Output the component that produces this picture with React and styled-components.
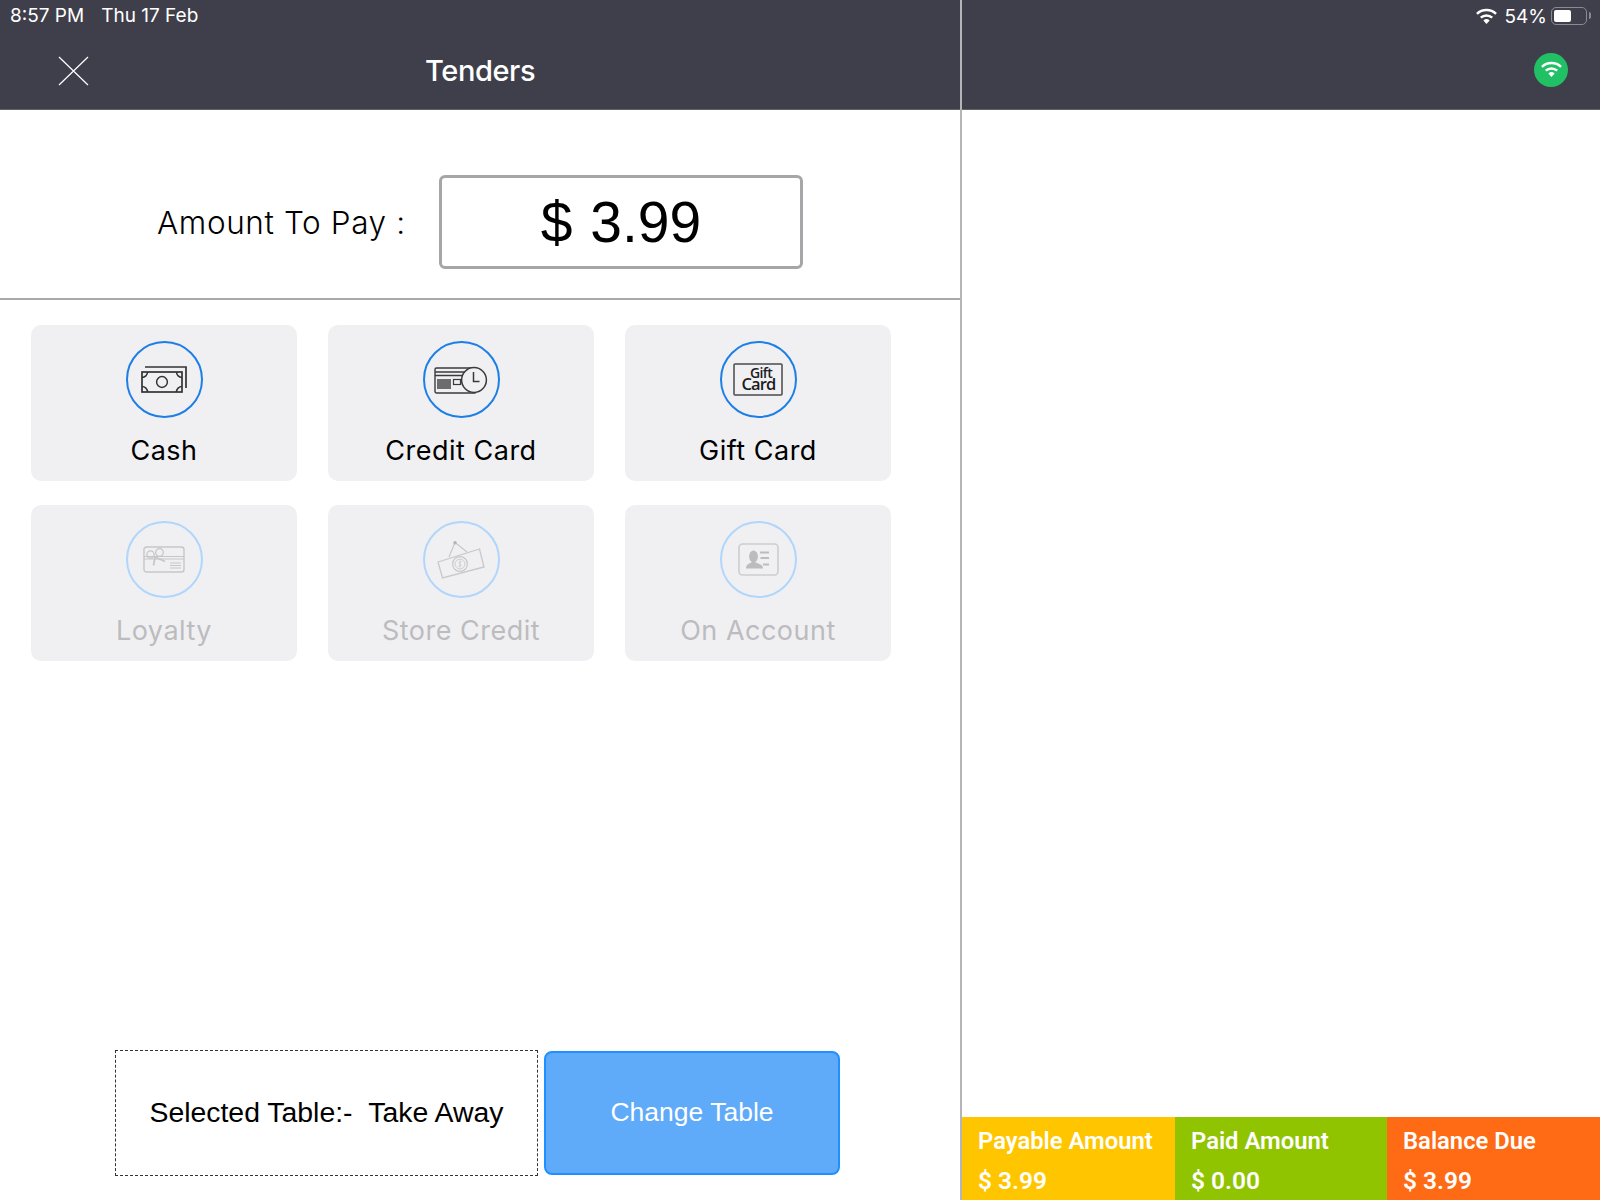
import React from "react";
import styled, { createGlobalStyle } from "styled-components";

const GlobalStyle = createGlobalStyle`
  html, body {
    margin: 0;
    padding: 0;
    background: #fff;
  }
  * {
    box-sizing: border-box;
  }
`;

const WifiGlyph = ({ size }) => (
  <svg width={size} height={size * 0.78} viewBox="0 0 22 17">
    <path d="M1 6 A14.5 14.5 0 0 1 21 6" fill="none" stroke="#fff" strokeWidth="2.6" />
    <path d="M5 10 A9 9 0 0 1 17 10" fill="none" stroke="#fff" strokeWidth="2.6" />
    <path d="M7.7 13 A4.8 4.8 0 0 1 14.3 13 L11 16.6 Z" fill="#fff" />
  </svg>
);

const CashIcon = () => (
  <svg width="46" height="27" viewBox="0 0 46 27" fill="none" stroke="#333335">
    <path d="M4 1 H45 V22" strokeWidth="1.7" />
    <rect x="1" y="6" width="40" height="20" strokeWidth="1.7" />
    <circle cx="21" cy="16" r="5.4" strokeWidth="1.5" />
    <path d="M1 11.5 A5.5 5.5 0 0 0 6.5 6 M35.5 6 A5.5 5.5 0 0 0 41 11.5 M1 20.5 A5.5 5.5 0 0 1 6.5 26 M35.5 26 A5.5 5.5 0 0 1 41 20.5" strokeWidth="1.5" />
  </svg>
);

const CreditIcon = () => (
  <svg width="54" height="28" viewBox="0 0 54 28" fill="none" stroke="#3a3a3c">
    <rect x="1" y="2" width="41" height="25" rx="1.5" strokeWidth="1.4" />
    <path d="M1 6 H42 M1 9.5 H42" strokeWidth="1.3" />
    <rect x="3" y="13" width="14" height="10" fill="#6c6c6e" stroke="none" />
    <rect x="19.5" y="13.5" width="7" height="5" strokeWidth="1.2" />
    <circle cx="40" cy="14" r="12.4" fill="#f0f0f3" strokeWidth="1.5" />
    <path d="M39.5 6 V15.5 H45.5" strokeWidth="1.5" />
  </svg>
);

const GiftIcon = () => (
  <svg width="50" height="33" viewBox="0 0 50 33">
    <rect x="1" y="1" width="48" height="31" rx="1" fill="none" stroke="#4a4a4c" strokeWidth="1.5" />
    <text fontFamily="'Open Sans', sans-serif" fontWeight="600" fill="#1c1c1e">
      <tspan x="17" y="15" fontSize="14" letterSpacing="-0.6">Gift</tspan>
      <tspan x="8.5" y="27" fontSize="16.5" letterSpacing="-0.9">Card</tspan>
    </text>
  </svg>
);

const LoyaltyIcon = () => (
  <svg width="42" height="27" viewBox="0 0 42 27" fill="none" stroke="#c6c6c8">
    <rect x="1" y="1" width="40" height="25" rx="2.5" strokeWidth="1.4" />
    <path d="M1 10.5 H41 M1 13 H41" strokeWidth="1.1" />
    <path d="M27 17 H38 M27 19.5 H38 M27 22 H38" strokeWidth="1.1" />
    <circle cx="7.5" cy="8.5" r="3.6" strokeWidth="1.3" />
    <circle cx="16.5" cy="6.5" r="3.8" strokeWidth="1.3" />
    <path d="M12 11 L22 15.5 M12 11 L10.5 19.5" strokeWidth="1.7" />
  </svg>
);

const StoreCreditIcon = () => (
  <svg width="48" height="38" viewBox="0 0 48 38" fill="none" stroke="#c8c8ca">
    <path d="M12 16 L18 1.5 L30 11" strokeWidth="1.2" />
    <circle cx="18" cy="1.8" r="1.7" fill="#b4b4b6" stroke="none" />
    <path d="M1 21 L42.5 8 L47 26 L5.5 37 Z" fill="#f0f0f3" strokeWidth="1.3" />
    <circle cx="23" cy="23" r="7.4" strokeWidth="1.2" />
    <circle cx="23" cy="23" r="4.9" strokeWidth="0.9" />
    <path d="M24.6 20.8 C22.4 19.8 21.2 21.6 23 23 C25 24.2 23.6 26 21.4 25 M23 19.5 V26.5" strokeWidth="0.8" />
  </svg>
);

const AccountIcon = () => (
  <svg width="41" height="33" viewBox="0 0 41 33">
    <rect x="1" y="1" width="39" height="31" rx="3.5" fill="none" stroke="#cdcdcf" strokeWidth="1.6" />
    <ellipse cx="15.5" cy="13.5" rx="4.4" ry="6" fill="#bcbcbe" />
    <path d="M8 25.5 C8 21 12 20.5 14 19 H17 C19 20.5 25 21 25 25.5 Z" fill="#bcbcbe" />
    <path d="M22 9.5 H31 M22.5 15 H31 M25 21.5 H31" stroke="#bcbcbe" strokeWidth="2" />
  </svg>
);

const tenders = [
  { name: "Cash", icon: <CashIcon /> },
  { name: "Credit Card", icon: <CreditIcon /> },
  { name: "Gift Card", icon: <GiftIcon /> },
  { name: "Loyalty", icon: <LoyaltyIcon />, disabled: true },
  { name: "Store Credit", icon: <StoreCreditIcon />, disabled: true },
  { name: "On Account", icon: <AccountIcon />, disabled: true },
];

export default function App() {
  return (
    <>
      <GlobalStyle />
      <Screen>
        <LeftPane>
          <Header>
            <StatusText>
              <span>8:57 PM</span>
              <span>Thu 17 Feb</span>
            </StatusText>
            <NavRow>
              <CloseButton>
                <svg width="32" height="30" viewBox="0 0 32 30" stroke="#fff" strokeWidth="1.2">
                  <path d="M1 1 L30 29 M30 1 L1 29" />
                </svg>
              </CloseButton>
              <Title>Tenders</Title>
            </NavRow>
          </Header>
          <AmountRow>
            <AmountLabel>Amount To Pay :</AmountLabel>
            <AmountBox>$ 3.99</AmountBox>
          </AmountRow>
          <TenderGrid>
            {tenders.map((t) => (
              <TenderTile key={t.name}>
                <IconCircle $disabled={t.disabled}>{t.icon}</IconCircle>
                <TenderName $disabled={t.disabled}>{t.name}</TenderName>
              </TenderTile>
            ))}
          </TenderGrid>
          <TableRow>
            <SelectedTable>Selected Table:-&nbsp;&nbsp;Take Away</SelectedTable>
            <ChangeTable>Change Table</ChangeTable>
          </TableRow>
        </LeftPane>
        <RightPane>
          <Header>
            <StatusRight>
              <WifiGlyph size={21} />
              <BatteryPercent>54%</BatteryPercent>
              <Battery>
                <BatteryFill />
              </Battery>
            </StatusRight>
            <NavRight>
              <WifiBadge>
                <WifiGlyph size={21} />
              </WifiBadge>
            </NavRight>
          </Header>
          <Summary>
            <SummaryCell $bg="#ffc600" $w={213}>
              <SummaryLabel>Payable Amount</SummaryLabel>
              <SummaryValue>$ 3.99</SummaryValue>
            </SummaryCell>
            <SummaryCell $bg="#90c400" $w={212}>
              <SummaryLabel>Paid Amount</SummaryLabel>
              <SummaryValue>$ 0.00</SummaryValue>
            </SummaryCell>
            <SummaryCell $bg="#ff6a14" $w={213}>
              <SummaryLabel>Balance Due</SummaryLabel>
              <SummaryValue>$ 3.99</SummaryValue>
            </SummaryCell>
          </Summary>
        </RightPane>
      </Screen>
    </>
  );
}

const Screen = styled.div`
  display: flex;
  width: 1600px;
  height: 1200px;
  overflow: hidden;
  background: #fff;
  font-family: "Roboto", "Liberation Sans", sans-serif;
`;

const LeftPane = styled.div`
  display: flex;
  flex-direction: column;
  width: 962px;
  height: 100%;
  border-right: 2px solid #b5b5b7;
`;

const RightPane = styled.div`
  display: flex;
  flex-direction: column;
  justify-content: space-between;
  width: 638px;
  height: 100%;
`;

const Header = styled.div`
  height: 110px;
  flex: none;
  background: #3f3f4b;
  color: #fff;
  border-bottom: 1px solid #62626c;
`;

const StatusText = styled.div`
  display: flex;
  gap: 17px;
  height: 32px;
  padding: 6px 0 0 10px;
  font-family: "Inter", sans-serif;
  font-size: 19px;
  line-height: 20px;
`;

const NavRow = styled.div`
  display: flex;
  align-items: center;
  height: 77px;
`;

const CloseButton = styled.div`
  display: flex;
  margin-left: 58px;
`;

const Title = styled.div`
  margin-left: 335px;
  font-family: "Inter", sans-serif;
  font-size: 29px;
  font-weight: 500;
  letter-spacing: -0.4px;
`;

const AmountRow = styled.div`
  display: flex;
  align-items: center;
  height: 190px;
  flex: none;
  padding: 36px 0 0 157px;
  border-bottom: 2px solid #a9a9ab;
`;

const AmountLabel = styled.div`
  width: 282px;
  font-family: "Inter", "Open Sans", sans-serif;
  font-size: 31.5px;
  font-weight: 300;
  letter-spacing: 0.6px;
  color: #000;
`;

const AmountBox = styled.div`
  display: flex;
  align-items: center;
  justify-content: center;
  width: 364px;
  height: 94px;
  border: 3px solid #a6a6a8;
  border-radius: 6px;
  font-family: "Liberation Sans", sans-serif;
  font-size: 57px;
  word-spacing: 2px;
  color: #000;
`;

const TenderGrid = styled.div`
  display: grid;
  grid-template-columns: repeat(3, 266px);
  grid-auto-rows: 156px;
  column-gap: 31px;
  row-gap: 24px;
  padding: 25px 0 0 31px;
`;

const TenderTile = styled.div`
  display: flex;
  flex-direction: column;
  align-items: center;
  padding-top: 16px;
  background: #f0f0f3;
  border-radius: 10px;
`;

const IconCircle = styled.div`
  display: flex;
  align-items: center;
  justify-content: center;
  width: 77px;
  height: 77px;
  border: 2px solid ${(p) => (p.$disabled ? "#b0d6fc" : "#1d7fe6")};
  border-radius: 50%;
`;

const TenderName = styled.div`
  margin-top: 16px;
  font-family: "Inter", "Open Sans", sans-serif;
  font-size: 27px;
  line-height: 34px;
  letter-spacing: 0.5px;
  color: ${(p) => (p.$disabled ? "#bcbcbe" : "#000")};
`;

const TableRow = styled.div`
  display: flex;
  align-items: center;
  gap: 6px;
  margin-top: auto;
  padding: 0 0 24px 115px;
`;

const SelectedTable = styled.div`
  display: flex;
  align-items: center;
  justify-content: center;
  width: 423px;
  height: 126px;
  padding-bottom: 2px;
  border: 1px dashed #333;
  font-family: "Liberation Sans", sans-serif;
  font-size: 28.4px;
  color: #000;
`;

const ChangeTable = styled.div`
  display: flex;
  align-items: center;
  justify-content: center;
  width: 296px;
  height: 124px;
  padding-bottom: 2px;
  background: #5faaf9;
  border: 2px solid #1e90ff;
  border-radius: 8px;
  font-family: "Liberation Sans", sans-serif;
  font-size: 26.5px;
  color: #fff;
`;

const StatusRight = styled.div`
  display: flex;
  align-items: center;
  justify-content: flex-end;
  height: 32px;
  padding-right: 13px;
  font-family: "Inter", sans-serif;
  font-size: 19px;
`;

const BatteryPercent = styled.span`
  margin: 0 4px 0 8px;
`;

const Battery = styled.div`
  position: relative;
  width: 36px;
  height: 18px;
  padding: 2px;
  border: 1.5px solid #8a8a92;
  border-radius: 5px;
  &::after {
    content: "";
    position: absolute;
    right: -5px;
    top: 4px;
    width: 2px;
    height: 7px;
    background: #8a8a92;
    border-radius: 0 2px 2px 0;
  }
`;

const BatteryFill = styled.div`
  width: 17px;
  height: 100%;
  background: #fff;
  border-radius: 2px;
`;

const NavRight = styled.div`
  display: flex;
  align-items: center;
  justify-content: flex-end;
  height: 77px;
  padding: 0 32px 2px 0;
`;

const WifiBadge = styled.div`
  display: flex;
  align-items: center;
  justify-content: center;
  width: 34px;
  height: 34px;
  background: #22c064;
  border-radius: 50%;
`;

const Summary = styled.div`
  display: flex;
  height: 83px;
`;

const SummaryCell = styled.div`
  width: ${(p) => p.$w}px;
  padding: 9px 0 0 16px;
  background: ${(p) => p.$bg};
  color: #fff;
  font-family: "Roboto", sans-serif;
  font-weight: 600;
`;

const SummaryLabel = styled.div`
  font-size: 23.8px;
  line-height: 30px;
`;

const SummaryValue = styled.div`
  margin-top: 10px;
  font-size: 24.5px;
  line-height: 29px;
`;
